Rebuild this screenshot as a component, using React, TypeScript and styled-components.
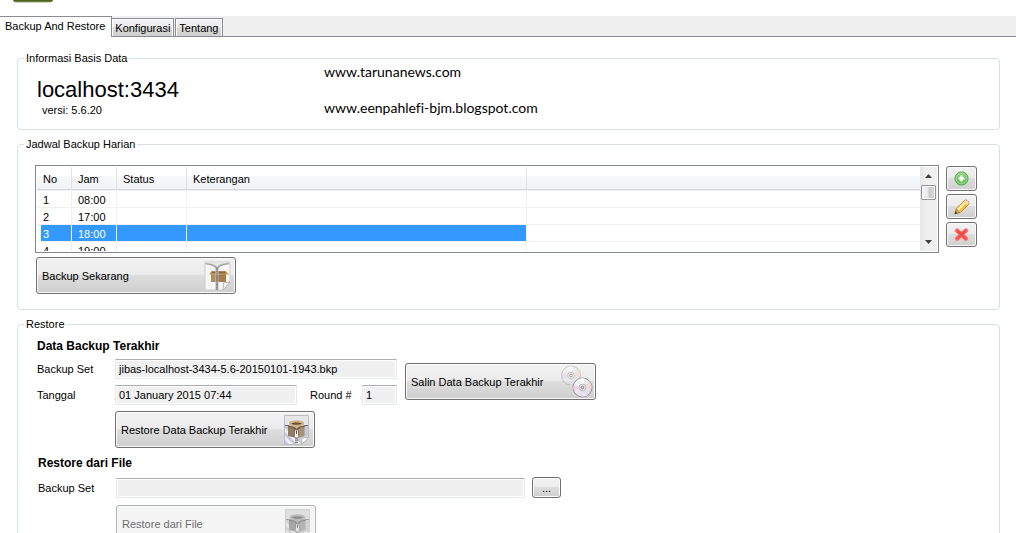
import React from "react";
import styled, { createGlobalStyle, css } from "styled-components";

const GlobalStyle = createGlobalStyle`
  *, *::before, *::after { box-sizing: border-box; }
  body {
    margin: 0;
    background: #fff;
    color: #000;
    font-family: "Liberation Sans", Arial, sans-serif;
    font-size: 11px;
    line-height: 14px;
  }
  button, input { font: inherit; color: inherit; }
`;

const Window = styled.main`
  height: 100vh;
  overflow: hidden;
  background: #fff;
`;

const Banner = styled.header`
  height: 16px;
  padding-left: 13px;
`;

const BannerLogo = styled.svg`
  display: block;
`;

const TabStrip = styled.div`
  display: flex;
  align-items: flex-end;
  height: 21px;
  background: #f0f0f0;
  border-bottom: 1px solid #898c95;
`;

const Tab = styled.button<{ $active?: boolean }>`
  height: 18px;
  margin: 0 1px 0 0;
  padding: 0 3px;
  border: 1px solid #898c95;
  border-bottom: 0;
  background: linear-gradient(#f2f2f2 0%, #ebebeb 50%, #dcdcdc 50%, #cfcfcf 100%);
  box-shadow: inset 1px 1px 0 #fcfcfc, inset -1px 0 0 #fcfcfc;
  white-space: nowrap;
  ${(p) =>
    p.$active &&
    css`
      align-self: stretch;
      height: auto;
      margin: 0 -1px -1px 0;
      padding: 0 6px 2px 5px;
      border-left: 0;
      background: #fff;
      box-shadow: none;
    `}
`;

const Panel = styled.div`
  display: flex;
  flex-direction: column;
  gap: 7px;
  padding: 14px 16px 0 17px;
`;

const Group = styled.fieldset`
  min-width: 0;
  margin: 0;
  padding: 0 0 0 19px;
  border: 1px solid #d5dfe5;
  border-radius: 4px;
`;

const GroupTitle = styled.legend`
  height: 14px;
  margin-left: -13px;
  padding: 0 2px;
`;

const InfoLayout = styled.div`
  display: grid;
  grid-template-columns: 287px 1fr;
  height: 64px;
`;

const ServerInfo = styled.div`
  padding-top: 12px;
`;

const ServerName = styled.h1`
  margin: 0;
  font-size: 22px;
  line-height: 26px;
  font-weight: 400;
`;

const ServerVersion = styled.p`
  margin: 0;
  padding-left: 5px;
`;

const Links = styled.div`
  display: flex;
  flex-direction: column;
  align-items: flex-start;
  gap: 22px;
`;

const SiteLink = styled.a`
  color: #000;
  text-decoration: none;
  font-family: Lato, sans-serif;
  font-size: 14px;
  line-height: 14px;
  font-variant-ligatures: none;
`;

const ScheduleBody = styled.div`
  display: flex;
  flex-direction: column;
  gap: 4px;
  padding: 14px 22px 15px 0;
  margin-left: -1px;
`;

const ScheduleRow = styled.div`
  display: flex;
  gap: 7px;
  margin-left: -1px;
`;

const ListBox = styled.div`
  display: flex;
  flex: 1;
  min-width: 0;
  height: 88px;
  padding: 1px;
  border: 1px solid #828790;
`;

const ListViewport = styled.div`
  flex: 1;
  min-width: 0;
  overflow: hidden;
`;

const ScheduleTable = styled.table`
  width: 100%;
  table-layout: fixed;
  border-spacing: 0;
`;

const HeadCell = styled.th<{ $width?: number }>`
  width: ${(p) => (p.$width ? `${p.$width}px` : "auto")};
  height: 23px;
  padding: 1px 6px 0;
  text-align: left;
  font-weight: 400;
  background: linear-gradient(#ffffff 0%, #ffffff 42%, #f7f8fa 42%, #f2f3f5 100%);
  border-right: ${(p) => (p.$width ? "1px solid #e0e2e5" : "0")};
  border-bottom: 1px solid #d5d5d5;
`;

const Row = styled.tr<{ $selected?: boolean }>`
  color: ${(p) => (p.$selected ? "#fff" : "#000")};
  td:not(:last-child) {
    background-color: ${(p) => (p.$selected ? "#3399ff" : "transparent")};
    background-clip: padding-box;
  }
  td:first-child { box-shadow: ${(p) => (p.$selected ? "inset 4px 0 0 #fff" : "none")}; }
`;

const Cell = styled.td`
  height: 17px;
  padding: 2px 6px 0;
  line-height: 14px;
  border-top: 1px solid #f0f0f0;
  border-right: 1px solid #f0f0f0;
  &:last-child { border-right: 0; }
`;

const ScrollTrack = styled.div`
  display: flex;
  flex-direction: column;
  width: 17px;
  background: linear-gradient(90deg, #e6e6e6, #f0f0f0 40%, #efefef);
`;

const ScrollArrow = styled.button`
  display: flex;
  align-items: center;
  justify-content: center;
  height: 18px;
  padding: 0;
  border: 0;
  background: transparent;
`;

const ScrollThumb = styled.div`
  height: 15px;
  margin: 0 1px auto;
  border: 1px solid #979797;
  border-radius: 1px;
  background: linear-gradient(90deg, #f5f5f5, #e9e9eb 45%, #c8c9cc 55%, #dadada);
  box-shadow: inset 0 0 0 1px #fbfbfb;
`;

const SideTools = styled.div`
  display: flex;
  flex-direction: column;
  gap: 3px;
  padding-top: 1px;
`;

const raised = css`
  border: 1px solid #707070;
  border-radius: 3px;
  background: linear-gradient(#f2f2f2 0%, #ebebeb 50%, #dddddd 50%, #cfcfcf 100%);
  box-shadow: inset 0 0 0 1px #fbfbfb;
`;

const ToolButton = styled.button`
  display: flex;
  align-items: center;
  justify-content: center;
  width: 31px;
  height: 25px;
  padding: 0;
  ${raised}
`;

const ActionButton = styled.button<{ $width: number }>`
  display: flex;
  flex: none;
  align-items: center;
  justify-content: space-between;
  width: ${(p) => p.$width}px;
  height: 37px;
  padding: 0 2px 0 5px;
  white-space: nowrap;
  ${raised}
  &:disabled {
    color: #6d6d6d;
    border-color: #adb2b5;
    background: #f4f4f4;
  }
`;

const BrowseButton = styled.button`
  width: 29px;
  height: 21px;
  margin-left: 7px;
  padding: 0;
  ${raised}
`;

const RestoreBody = styled.div`
  padding: 8px 0 16px;
`;

const Section = styled.section`
  display: flex;
  flex-direction: column;
  gap: 6px;
  & + & {
    gap: 7px;
    padding: 8px 0 0 1px;
  }
`;

const LastBackup = styled.div`
  display: flex;
  align-items: flex-start;
  gap: 8px;
`;

const SectionTitle = styled.h2`
  margin: 0;
  font-size: 12px;
  line-height: 14px;
  font-weight: 700;
`;

const FormRow = styled.div`
  display: flex;
  align-items: center;
`;

const Fields = styled.div`
  display: flex;
  flex-direction: column;
  gap: 6px;
`;

const Label = styled.label`
  width: 78px;
`;

const RoundLabel = styled.label`
  width: 65px;
  padding-left: 13px;
`;

const TextBox = styled.input<{ $width: number }>`
  width: ${(p) => p.$width}px;
  height: 20px;
  padding: 0 3px;
  border: 1px solid #e3e9ef;
  border-top-color: #abadb3;
  border-radius: 1px;
  background: #f0f0f0;
  box-shadow: inset 0 0 0 1px #fff;
  outline: 0;
`;

const CopyAction = styled.div`
  padding-top: 4px;
`;

const Indent = styled.div`
  padding-left: 78px;
`;

const AddIcon = () => (
  <svg width="16" height="16" viewBox="1 1 16 16" aria-hidden="true">
    <defs>
      <radialGradient id="green" cx="50%" cy="35%" r="65%">
        <stop offset="0" stopColor="#a2da90" />
        <stop offset="1" stopColor="#4fae45" />
      </radialGradient>
    </defs>
    <circle cx="8.5" cy="8.5" r="6.6" fill="url(#green)" stroke="#56a94f" />
    <circle cx="8.5" cy="8.5" r="5.4" fill="none" stroke="#b6e2aa" strokeWidth=".9" />
    <path d="M8.5 5.500v6M5.500 8.500h6" stroke="#fff" strokeWidth="2.200" />
  </svg>
);

const PencilIcon = () => (
  <svg width="16" height="16" viewBox="0 0 16 16" aria-hidden="true">
    <path d="M1 14.500l1.200-4.800L10 1.900c1-1.100 2.200-1.200 3.300-.2l.9.900c1.100 1.100 1 2.300 0 3.300L6.200 13.600z" fill="#f5c659" stroke="#cb8b30" />
    <path d="M3.200 10l6.900-6.900 1.500 1.400-6.800 6.900z" fill="#fff6a8" />
    <path d="M5.200 12l7-7 1 1-7 7z" fill="#f0bb35" />
    <path d="M10 2.800l1-1c.8-.6 1.600-.5 2.200.1l.8.8c.7.8.6 1.500 0 2.200l-1 1z" fill="#f8d8c0" />
    <path d="M2.500 10.300l3.100 3L1.200 14.800z" fill="#e5b775" stroke="#8f6229" strokeWidth=".6" />
    <path d="M1.500 12.200l2 2-2.900 1z" fill="#4a3418" />
  </svg>
);

const DeleteIcon = () => (
  <svg width="16" height="16" viewBox="1 1 16 16" aria-hidden="true">
    <path d="M4.200 4.600L12.800 12.600M12.800 4.600L4.200 12.600" stroke="#ee8f8c" strokeWidth="4.600" strokeLinecap="round" />
    <path d="M4.200 4.600L12.800 12.600M12.800 4.600L4.200 12.600" stroke="#fb605c" strokeWidth="3.600" strokeLinecap="round" />
    <path d="M5 5.500l7 6.500M12 5.500l-7 6.500" stroke="#ee4744" strokeWidth="1.400" strokeLinecap="round" />
  </svg>
);

const PackIcon = () => (
  <svg width="30" height="32" viewBox="0 0 30 32" aria-hidden="true">
    <path d="M2 2h25v20l-7 8H2z" fill="#f6f6f5" stroke="#cdcdcd" />
    <path d="M2.500 2.500h24L14 8z" fill="#e6e8e8" />
    <path d="M27 22l-7 8 .5-7z" fill="#fff" stroke="#b3b3b3" />
    <path d="M8 14h15v8H8z" fill="#b78b52" />
    <path d="M15 14h8v8h-8z" fill="#a77d47" />
    <path d="M6 14.500L8.500 11H14v3.500z" fill="#cfa66a" />
    <path d="M26 14.500L23 11h-9v3.500z" fill="#c69b5c" />
    <path d="M9 11.500h13l1 2H8z" fill="#8d6a3b" />
    <path d="M2.500 3.500C8 4 12 5 14 8.500 16 5 20 4 26 3.500" fill="none" stroke="#8f9395" strokeWidth="1.600" />
    <path d="M2.500 3C8 3.200 12 4.500 14 7.500 16 4.500 20 3.200 26 3" fill="none" stroke="#cfd2d3" strokeWidth=".8" />
    <path d="M14 8v22" stroke="#c0c2c3" strokeWidth="3.200" />
    <path d="M14 8v22" stroke="#76797b" strokeWidth="1.800" strokeDasharray="1 .6" />
    <path d="M13 15h2.500v6H13z" fill="#858889" />
  </svg>
);

const UnpackIcon = ({ muted }: { muted?: boolean }) => {
  const c = muted
    ? { page: "#dfdfdf", edge: "#d0d0d0", stripe: "#d3d3d3", light: "#e6e6e6", line: "#a0a0a0", lid: "#b9b9b9", front: "#b4b4b4", side: "#a6a6a6", dark: "#8c8c8c" }
    : { page: "#e6e6ea", edge: "#bcbdc0", stripe: "#c6cad8", light: "#eeeff4", line: "#66708c", lid: "#d0b588", front: "#a99077", side: "#937a62", dark: "#66523b" };
  return (
    <svg width="30" height="32" viewBox="0 0 30 32" aria-hidden="true">
      <path d="M2.500 1.500h24v22l-7 7h-17z" fill={c.page} stroke={c.edge} />
      <path d="M3 12h23v11l-7 7H3z" fill={c.stripe} />
      <path d="M3 14l16 16h-4L3 18zM3 22l8 8H7l-4-4z" fill={c.light} />
      <path d="M3 11.500h23" stroke={c.line} />
      <path d="M26.500 23.500l-7 7 .5-6.500z" fill="#fff" stroke={c.edge} />
      <path d="M6 12h8.500v12L6 22z" fill={c.side} />
      <path d="M22.500 12h-8v12l8-2z" fill={c.front} />
      <path d="M7 8.500C9 5.500 20 5.500 22 8.500V12l-7.500 2L7 12z" fill={c.lid} />
      <path d="M9 9.500C11 8 18 8 20 9.500c-1.500 1.800-9.500 1.800-11 0z" fill={c.dark} />
      <path d="M6 12.500l5 .5 3.500 3 3.500-3 4.500-.5" fill="none" stroke={c.dark} strokeWidth="1.200" />
      <path d="M13 15.500h3l.9 7c0 2-4.800 2-4.800 0z" fill={muted ? "#e2e2e2" : "#f3f3f3"} stroke={c.dark} strokeWidth=".7" />
      <path d="M14.500 16.500V20" stroke={c.dark} />
      <path d="M14.500 24.500V30" stroke={muted ? "#9a9a9a" : "#77797f"} strokeWidth="3" strokeDasharray="1 .8" />
    </svg>
  );
};

const Disc = ({ x, y, faded }: { x: number; y: number; faded?: boolean }) => (
  <g transform={`translate(${x} ${y})`} opacity={faded ? 0.7 : 1}>
    <circle r="9.500" fill="url(#disc)" stroke={faded ? "#b3b0b3" : "#989198"} />
    <path d="M0 0L-9 -2A9 9 0 0 0 -8 4z" fill="#ecd6ea" />
    <path d="M0 0L9 1A9 9 0 0 0 7 -6z" fill="#f3dadb" />
    <path d="M0 0L-4 -8A9 9 0 0 1 2 -9z" fill="#fff" />
    <path d="M0 0L5 8A9 9 0 0 1 -1 9z" fill="#e4dff2" />
    <circle r="3.400" fill="#ebebeb" stroke="#b0adb0" strokeWidth=".8" />
    <circle r="1.300" fill="#fff" stroke="#777" strokeWidth="1" />
  </g>
);

const DiscsIcon = () => (
  <svg width="33" height="33" viewBox="0 0 33 33" aria-hidden="true">
    <defs>
      <linearGradient id="disc" x1="0" y1="0" x2="1" y2="1">
        <stop offset="0" stopColor="#fafafa" />
        <stop offset="1" stopColor="#d8d5da" />
      </linearGradient>
    </defs>
    <Disc x={11} y={10.5} faded />
    <Disc x={22.5} y={22.5} />
  </svg>
);

const schedule = [
  { no: 1, time: "08:00" },
  { no: 2, time: "17:00" },
  { no: 3, time: "18:00", selected: true },
  { no: 4, time: "19:00" },
];

export default function App() {
  return (
    <>
      <GlobalStyle />
      <Window>
        <Banner>
          <BannerLogo width="40" height="3" viewBox="0 0 40 3" aria-hidden="true">
            <path d="M0 0h40l-1 2H1z" fill="#4f6623" />
            <path d="M1 1.500h38l-2 1.500H3z" fill="#a7b48c" opacity=".6" />
          </BannerLogo>
        </Banner>

        <TabStrip role="tablist">
          <Tab role="tab" aria-selected="true" $active>Backup And Restore</Tab>
          <Tab role="tab" aria-selected="false">Konfigurasi</Tab>
          <Tab role="tab" aria-selected="false">Tentang</Tab>
        </TabStrip>

        <Panel role="tabpanel">
          <Group>
            <GroupTitle>Informasi Basis Data</GroupTitle>
            <InfoLayout>
              <ServerInfo>
                <ServerName>localhost:3434</ServerName>
                <ServerVersion>versi: 5.6.20</ServerVersion>
              </ServerInfo>
              <Links>
                <SiteLink href="#tarunanews">www.tarunanews.com</SiteLink>
                <SiteLink href="#eenpahlefi">www.eenpahlefi-bjm.blogspot.com</SiteLink>
              </Links>
            </InfoLayout>
          </Group>

          <Group>
            <GroupTitle>Jadwal Backup Harian</GroupTitle>
            <ScheduleBody>
              <ScheduleRow>
                <ListBox>
                  <ListViewport>
                    <ScheduleTable>
                      <thead>
                        <tr>
                          <HeadCell $width={35}>No</HeadCell>
                          <HeadCell $width={45}>Jam</HeadCell>
                          <HeadCell $width={70}>Status</HeadCell>
                          <HeadCell $width={340}>Keterangan</HeadCell>
                          <HeadCell />
                        </tr>
                      </thead>
                      <tbody>
                        {schedule.map((s) => (
                          <Row key={s.no} $selected={s.selected}>
                            <Cell>{s.no}</Cell>
                            <Cell>{s.time}</Cell>
                            <Cell />
                            <Cell />
                            <Cell />
                          </Row>
                        ))}
                      </tbody>
                    </ScheduleTable>
                  </ListViewport>
                  <ScrollTrack>
                    <ScrollArrow aria-label="Scroll up">
                      <svg width="7" height="4" viewBox="0 0 7 4"><path d="M0 4L3.500 0 7 4z" fill="#404040" /></svg>
                    </ScrollArrow>
                    <ScrollThumb />
                    <ScrollArrow aria-label="Scroll down">
                      <svg width="7" height="4" viewBox="0 0 7 4"><path d="M0 0h7L3.500 4z" fill="#404040" /></svg>
                    </ScrollArrow>
                  </ScrollTrack>
                </ListBox>
                <SideTools>
                  <ToolButton aria-label="Tambah"><AddIcon /></ToolButton>
                  <ToolButton aria-label="Ubah"><PencilIcon /></ToolButton>
                  <ToolButton aria-label="Hapus"><DeleteIcon /></ToolButton>
                </SideTools>
              </ScheduleRow>
              <ActionButton $width={200}>
                Backup Sekarang
                <PackIcon />
              </ActionButton>
            </ScheduleBody>
          </Group>

          <Group>
            <GroupTitle>Restore</GroupTitle>
            <RestoreBody>
              <Section>
                <SectionTitle>Data Backup Terakhir</SectionTitle>
                <LastBackup>
                  <Fields>
                    <FormRow>
                      <Label htmlFor="last-set">Backup Set</Label>
                      <TextBox id="last-set" $width={282} readOnly value="jibas-localhost-3434-5.6-20150101-1943.bkp" />
                    </FormRow>
                    <FormRow>
                      <Label htmlFor="last-date">Tanggal</Label>
                      <TextBox id="last-date" $width={182} readOnly value="01 January 2015 07:44" />
                      <RoundLabel htmlFor="last-round">Round #</RoundLabel>
                      <TextBox id="last-round" $width={35} readOnly value="1" />
                    </FormRow>
                  </Fields>
                  <CopyAction>
                    <ActionButton $width={191}>
                      Salin Data Backup Terakhir
                      <DiscsIcon />
                    </ActionButton>
                  </CopyAction>
                </LastBackup>
                <Indent>
                  <ActionButton $width={200}>
                    Restore Data Backup Terakhir
                    <UnpackIcon />
                  </ActionButton>
                </Indent>
              </Section>
              <Section>
                <SectionTitle>Restore dari File</SectionTitle>
                <FormRow>
                  <Label htmlFor="file-set">Backup Set</Label>
                  <TextBox id="file-set" $width={409} readOnly value="" />
                  <BrowseButton>...</BrowseButton>
                </FormRow>
                <Indent>
                  <ActionButton $width={200} disabled>
                    Restore dari File
                    <UnpackIcon muted />
                  </ActionButton>
                </Indent>
              </Section>
            </RestoreBody>
          </Group>
        </Panel>
      </Window>
    </>
  );
}
